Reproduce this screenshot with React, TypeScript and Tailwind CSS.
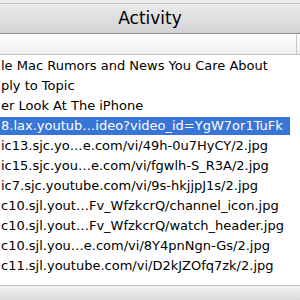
const rows = [
  "le Mac Rumors and News You Care About",
  "ply to Topic",
  "er Look At The iPhone",
  "8.lax.youtub…ideo?video_id=YgW7or1TuFk",
  "ic13.sjc.yo…e.com/vi/49h-0u7HyCY/2.jpg",
  "ic15.sjc.you…e.com/vi/fgwlh-S_R3A/2.jpg",
  "ic7.sjc.youtube.com/vi/9s-hkjjpJ1s/2.jpg",
  "c10.sjl.yout…Fv_WfzkcrQ/channel_icon.jpg",
  "c10.sjl.yout…Fv_WfzkcrQ/watch_header.jpg",
  "c10.sjl.you…e.com/vi/8Y4pnNgn-Gs/2.jpg",
  "c11.sjl.youtube.com/vi/D2kJZOfq7zk/2.jpg",
];

const selected = 3;

export default function App() {
  return (
    <div className="flex h-[300px] w-[300px] flex-col overflow-hidden bg-white font-['DejaVu_Sans',sans-serif]">
      <div className="h-[3px] bg-[#ececec]" />
      <div className="flex h-[31px] items-center justify-center border-t border-b border-t-[#c4c4c4] border-b-[#8c8c8c] bg-gradient-to-b from-[#ebebeb] to-[#d3d3d3] text-[17px] text-black">
        Activity
      </div>
      <div className="flex h-[21px] border-b border-[#c2c2c2] bg-gradient-to-b from-[#fdfdfd] to-[#eeeeee]">
        <div className="flex-1 border-r border-[#c8c8c8]" />
        <div className="w-[3px]" />
      </div>
      <div className="flex flex-1 flex-col pt-[1px]">
        {rows.map((text, i) => (
          <div key={i} className="flex h-[20px] items-center">
            <div
              className={
                i === selected
                  ? "mr-[10px] flex h-[18px] flex-1 items-center overflow-hidden whitespace-nowrap bg-[#3875d7] pl-[1px] text-[13px] text-white"
                  : "flex h-[18px] flex-1 items-center whitespace-nowrap pl-[1px] text-[13px] text-black"
              }
            >
              {text}
            </div>
          </div>
        ))}
      </div>
      <div className="h-[15px] border-t border-[#bdbdbd] bg-gradient-to-b from-[#f3f3f3] to-[#dadada]" />
    </div>
  );
}
